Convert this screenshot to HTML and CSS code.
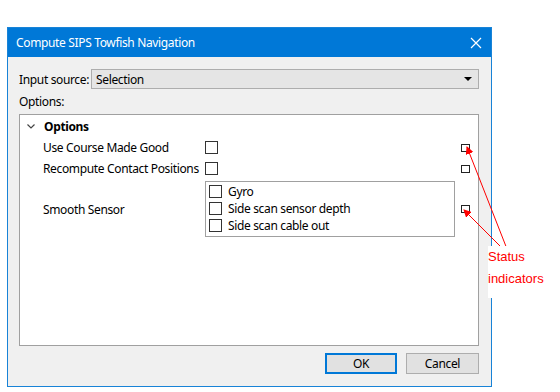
FILE: index.html
```html
<!DOCTYPE html>
<html lang="en">
<head>
    <meta charset="UTF-8">
    <title>Compute SIPS Towfish Navigation</title>
    <link rel="stylesheet" href="styles.css">
</head>
<body>

    <div class="dialog">
        <div class="titlebar">
            <span class="title">Compute SIPS Towfish Navigation</span>
            <svg class="close" width="12" height="12" viewBox="0 0 12 12">
                <path d="M1 1 L11 11 M11 1 L1 11" stroke="#fff" stroke-width="1.2" fill="none"/>
            </svg>
        </div>

        <div class="content">
            <div class="field">
                <span class="field-label">Input source:</span>
                <div class="combo">
                    <span>Selection</span>
                    <svg width="8" height="4" viewBox="0 0 8 4"><path d="M0 0 H8 L4 4 Z" fill="#000"/></svg>
                </div>
            </div>

            <div class="options-label">Options:</div>

            <div class="tree">
                <div class="tree-head">
                    <svg class="chevron" width="8" height="5" viewBox="0 0 8 5">
                        <path d="M0.5 0.5 L4 4 L7.5 0.5" stroke="#444" stroke-width="1.2" fill="none"/>
                    </svg>
                    <span>Options</span>
                </div>

                <div class="row">
                    <span class="row-label">Use Course Made Good</span>
                    <span class="check"></span>
                    <span class="status"></span>
                </div>
                <div class="row">
                    <span class="row-label">Recompute Contact Positions</span>
                    <span class="check"></span>
                    <span class="status"></span>
                </div>
                <div class="row row-group">
                    <span class="row-label">Smooth Sensor</span>
                    <div class="group">
                        <label class="group-item"><span class="check"></span>Gyro</label>
                        <label class="group-item"><span class="check"></span>Side scan sensor depth</label>
                        <label class="group-item"><span class="check"></span>Side scan cable out</label>
                    </div>
                    <span class="status"></span>
                </div>
            </div>

            <div class="buttons">
                <button class="btn btn-default">OK</button>
                <button class="btn">Cancel</button>
            </div>
        </div>
    </div>

    <!-- annotation overlay -->
    <svg class="arrows" width="560" height="392" viewBox="0 0 560 392">
        <defs>
            <marker id="head" markerWidth="8" markerHeight="8" refX="7" refY="4" orient="auto" markerUnits="userSpaceOnUse">
                <path d="M0 0 L8 4 L0 8 Z" fill="#f00"/>
            </marker>
        </defs>
        <line x1="507" y1="249" x2="467" y2="147" stroke="#f00" stroke-width="1" marker-end="url(#head)"/>
        <line x1="503" y1="249" x2="464" y2="210" stroke="#f00" stroke-width="1" marker-end="url(#head)"/>
    </svg>
    <div class="note">Status<br>indicators</div>

</body>
</html>
```

FILE: styles.css
```css
* {
    margin: 0;
    padding: 0;
    box-sizing: border-box;
}

body {
    background: #fff;
    font-family: "Noto Sans", "Liberation Sans", sans-serif;
    font-size: 12px;
    letter-spacing: -0.35px;
    color: #000;
    padding: 27px 0 0 7px;
    position: relative;
    width: 560px;
    height: 392px;
    overflow: hidden;
}

.dialog {
    width: 485px;
    height: 360px;
    border: 1px solid #1883d7;
    background: #f0f0f0;
    display: flex;
    flex-direction: column;
}

.titlebar {
    height: 29px;
    background: #0078d7;
    display: flex;
    align-items: center;
    padding: 0 9px 0 8px;
    color: #fff;
}

.title {
    flex: 1;
    white-space: nowrap;
}

.content {
    padding: 12px 12px 0 11px;
}

.field {
    display: flex;
    align-items: center;
    height: 20px;
}

.field-label {
    width: 72px;
    flex-shrink: 0;
    white-space: nowrap;
}

.combo {
    flex: 1;
    height: 20px;
    background: #e5e5e5;
    border: 1px solid #adadad;
    display: flex;
    align-items: center;
    justify-content: space-between;
    padding: 0 6px 0 4px;
}

.options-label {
    height: 25px;
    line-height: 25px;
}

.tree {
    height: 232px;
    background: #fff;
    border: 1px solid #a0a0a0;
    padding: 1px 8px 0 0;
}

.tree-head {
    height: 21px;
    display: flex;
    align-items: center;
    font-weight: bold;
}

.chevron {
    margin: 0 9px 0 7px;
}

.row {
    height: 21px;
    display: flex;
    align-items: center;
    padding-left: 23px;
}

.row-label {
    width: 162px;
    flex-shrink: 0;
    white-space: nowrap;
}

.check {
    display: inline-block;
    width: 13px;
    height: 13px;
    border: 1px solid #333;
    background: #fff;
    flex-shrink: 0;
}

.status {
    width: 9px;
    height: 8px;
    border: 1.5px solid #222;
    margin-left: auto;
}

.row-group {
    height: 56px;
    margin-top: 2px;
}

.group {
    width: 250px;
    height: 56px;
    border: 1px solid #a0a0a0;
    padding: 1px 0 0 3px;
}

.group-item {
    height: 17px;
    display: flex;
    align-items: center;
    gap: 6px;
    white-space: nowrap;
}

.buttons {
    display: flex;
    justify-content: flex-end;
    gap: 9px;
    margin-top: 7px;
}

.btn {
    width: 73px;
    height: 21px;
    font-family: inherit;
    font-size: 12px;
    letter-spacing: inherit;
    background: #e1e1e1;
    border: 1px solid #adadad;
}

.btn-default {
    width: 72px;
    border: 2px solid #0078d7;
}

.arrows {
    position: absolute;
    left: 0;
    top: 0;
    pointer-events: none;
}

.note {
    position: absolute;
    left: 488px;
    top: 246px;
    width: 72px;
    height: 52px;
    background: #fff;
    color: #f00;
    font-family: "Liberation Sans", Arial, sans-serif;
    font-size: 13px;
    letter-spacing: 0;
    line-height: 22px;
}
```
